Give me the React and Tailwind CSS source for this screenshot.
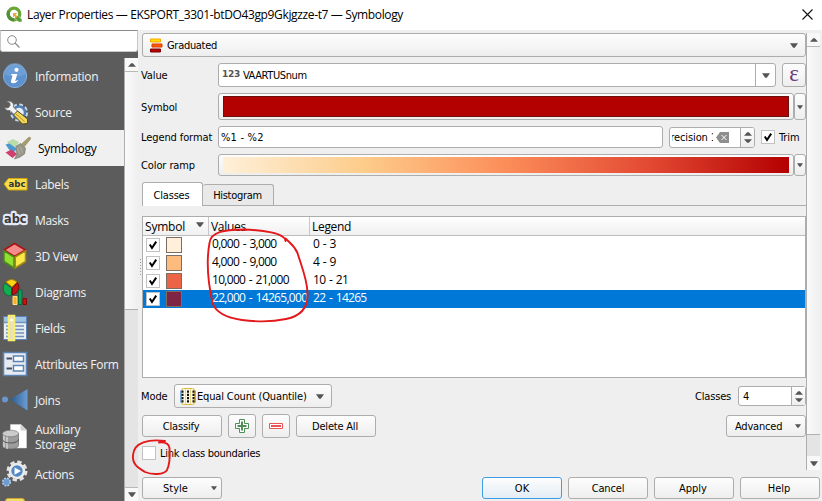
import React from "react";

const UI = "font-['DejaVu_Sans_Condensed','Noto_Sans',sans-serif]";
const SEGOE = "font-['Open_Sans','Noto_Sans',sans-serif]";
const FACE = "bg-gradient-to-b from-[#fdfdfd] to-[#eeeeee] border border-[#adadad] rounded-[3px]";

const Down = ({ small }) => (
  <svg width={small ? 6 : 8} height={small ? 4 : 5} viewBox="0 0 8 5" preserveAspectRatio="none" className="shrink-0">
    <path d="M0 0.3h8L4.8 4.7H3.2z" fill="#555" />
  </svg>
);
const Up = () => (
  <svg width="8" height="4" viewBox="0 0 8 5" preserveAspectRatio="none" className="shrink-0">
    <path d="M0 4.7h8L4.8 0.3H3.2z" fill="#555" />
  </svg>
);

function Check({ on }) {
  return (
    <span className="flex h-[14px] w-[14px] shrink-0 items-center justify-center border border-[#c2c2c2] bg-white">
      {on && (
        <svg width="10" height="10" viewBox="0 0 10 10">
          <path d="M1.8 4.4 4 8 8.200 1.600" fill="none" stroke="#000" strokeWidth="2" />
        </svg>
      )}
    </span>
  );
}

function Button({ children, className = "" }) {
  return (
    <button className={`${FACE} flex h-[22px] w-[80px] shrink-0 items-center justify-center ${className}`}>
      <span className="pt-[2px]">{children}</span>
    </button>
  );
}

function MenuButton({ children, className = "" }) {
  return (
    <button className={`${FACE} flex h-[22px] w-[80px] shrink-0 items-center pr-[4px] ${className}`}>
      <span className="flex-1 pt-[2px] text-left">{children}</span>
      <Down small />
    </button>
  );
}

function Spin() {
  return (
    <span className="flex h-full w-[14px] shrink-0 flex-col items-center justify-center gap-[3px] border-l border-[#adadad] bg-gradient-to-b from-[#fdfdfd] to-[#eeeeee]">
      <Up />
      <svg width="8" height="4" viewBox="0 0 8 5" preserveAspectRatio="none"><path d="M0 0.3h8L4.8 4.7H3.2z" fill="#555" /></svg>
    </span>
  );
}

/* ---------- sidebar icons, 28x28 ---------- */
const Svg = ({ children }) => (
  <svg width="28" height="28" viewBox="0 0 28 28" className="shrink-0">{children}</svg>
);
const icons = {
  info: (
    <Svg>
      <circle cx="14" cy="14" r="11.6" fill="#5d92cf" stroke="#86aedb" strokeWidth="1" />
      <path d="M3 12a11 11 0 0 1 22 0c-5 3-15 4-22 0z" fill="#79a6da" opacity=".6" />
      <circle cx="15.500" cy="7.800" r="2.100" fill="#fff" />
      <path d="M10.500 12h5.800l-2.100 7q1 .2 2.300-1l.5.7q-2.500 3-5.300 2.600-2.200-.4-1.600-2.800l1.500-5-1.500-.2z" fill="#fff" />
    </Svg>
  ),
  source: (
    <Svg>
      <circle cx="18" cy="14.500" r="7.500" fill="none" stroke="#c9d8ea" strokeWidth="3" strokeDasharray="3.600 2.290" />
      <circle cx="18" cy="14.500" r="6" fill="#e8eef5" stroke="#4f7db5" strokeWidth="2.500" />
      <path d="M5 3.500q4.500-1.500 7 1.500 1.200 2 .4 4l5.600 5.500-3.500 3.500-5.500-5.500q-4 .6-5.500-3l3.600.4 2-2.400-.3-2.400z" fill="#f2f2f2" stroke="#666" strokeWidth=".8" />
      <path d="m12.500 17 4-4 10 8v4.500l-5 .5z" fill="#f3d65c" stroke="#55481a" strokeWidth="1" />
      <path d="m15 16 8.500 7.500" stroke="#b99420" strokeWidth="1" />
    </Svg>
  ),
  symbology: (
    <Svg>
      <path d="M4 8 10 5l6 3-3 5.500-6-1z" fill="#b9dca9" />
      <path d="m2.500 10.500 4-1 7 5-4 6z" fill="#4b98d1" />
      <path d="m2.500 18.500 6-3 5.500 4.500-4.500 4z" fill="#d0416f" />
      <path d="M13 12.500 17.500 9.500l5 4.500-1 6q-4 3.500-10 5 3.500-4.500 1.500-8z" fill="#98978a" stroke="#77766a" strokeWidth=".7" />
      <path d="m14 13.500 3 7M17 12.500l2.500 6" stroke="#b9b8ab" strokeWidth=".8" />
      <path d="m18.500 10 7-6.500q2.500-1 2.300 1.200L21.500 12.500z" fill="#a89d70" stroke="#8a8058" strokeWidth=".5" />
    </Svg>
  ),
  labels: (
    <Svg>
      <path d="M3 14 7.500 8.500h18.500v11.500H7.500z" fill="#f7df4c" stroke="#d1a40e" strokeWidth="1" />
      <text x="7.500" y="17" fontSize="9.500" fontWeight="bold" fontFamily="DejaVu Sans" fill="#333" textLength="17" lengthAdjust="spacingAndGlyphs">abc</text>
    </Svg>
  ),
  masks: (
    <Svg>
      <text x="3" y="17" fontSize="13" fontWeight="bold" fontFamily="DejaVu Sans" fill="#3a3a3a" stroke="#e4e9f8" strokeWidth="4.500" strokeLinejoin="round" paintOrder="stroke" textLength="22.500" lengthAdjust="spacingAndGlyphs">abc</text>
    </Svg>
  ),
  cube: (
    <Svg>
      <path d="M13.500 1.500 24.500 8 13.500 14.500 3 8z" fill="#f58a8a" stroke="#a81515" strokeWidth="1.600" />
      <path d="M3 8.800 13 15v11L3 19.500z" fill="#8fe02f" stroke="#4a8f16" strokeWidth="1.500" />
      <path d="M24.500 8.800 14.300 15v11l10.200-6.500z" fill="#fbe94c" stroke="#a98b10" strokeWidth="1.500" />
    </Svg>
  ),
  diagrams: (
    <Svg>
      <path d="M10.500 10 4 5a7.500 8 0 0 0 4 13l2.500-1z" fill="#10b050" stroke="#0b6b35" />
      <path d="M11 9 5 4q5.500-5 11 0z" fill="#fbd514" stroke="#a88000" />
      <path d="M11.500 10 16.500 4.500q3 5-.500 10l-5 2.500z" fill="#c81212" stroke="#7a0808" />
      <path d="M12 18.500h4V26.500h-4z" fill="#fcae22" stroke="#ffe38a" />
      <path d="M17.500 12h3.500v14.500h-3.500z" fill="#0ba05a" stroke="#06693a" />
      <path d="M22 20.500h3.500V26.500H22z" fill="#c81212" stroke="#8a0808" />
    </Svg>
  ),
  fields: (
    <Svg>
      <path d="M2.500 2.500h23v23h-23z" fill="#e9eef3" stroke="#5b82b4" />
      <path d="M3 3h22v5H3z" fill="#9fc3e6" />
      <path d="M3 8.500h22M5 12h18M5 15.500h18M5 19h18M5 22.500h18" stroke="#7391b8" strokeWidth="1.400" />
      <path d="M7.500 1.500h6v25h-6z" fill="#e9e2b4" stroke="#faf06a" strokeWidth="1.600" />
      <circle cx="10.500" cy="6" r="1.500" fill="#fff" />
    </Svg>
  ),
  form: (
    <Svg>
      <path d="M2.500 2.500h23v23h-23z" fill="#e6ebf1" stroke="#5b82b4" strokeWidth="1.600" />
      <path d="M5.500 8.500H11M5.500 18.500H11" stroke="#44506a" strokeWidth="2" />
      <path d="M12.500 6h10v5.500h-10zM12.500 15.500h10V21h-10z" fill="#fff" stroke="#5b82b4" strokeWidth="1.500" />
    </Svg>
  ),
  joins: (
    <Svg>
      <defs><linearGradient id="jg" x1="0" x2="1"><stop offset="0" stopColor="#275a8f" /><stop offset="1" stopColor="#6b9dd3" /></linearGradient></defs>
      <path d="M9 13.500 26.500 3v21.500z" fill="url(#jg)" />
      <circle cx="4" cy="13.500" r="3" fill="#6b97cd" />
    </Svg>
  ),
  storage: (
    <Svg>
      <path d="M9.500 1.500h10.500l5.500 5.500v18H9.500z" fill="#fff" stroke="#ddd" strokeWidth=".5" />
      <path d="M19.500 1.500v6h6z" fill="#cfcfcf" />
      <path d="M1.500 10.500v12a8 3.500 0 0 0 16 0v-12z" fill="#9c9c9c" stroke="#666" strokeWidth=".7" />
      <path d="M3 11v13.500M6 12v14" stroke="#ddd" strokeWidth="1.800" opacity=".7" />
      <ellipse cx="9.500" cy="10.500" rx="8" ry="3.300" fill="#cbcbcb" stroke="#777" strokeWidth=".7" />
      <path d="M1.500 16.500a8 3.500 0 0 0 16 0" fill="none" stroke="#555" />
    </Svg>
  ),
  actions: (
    <Svg>
      <circle cx="16" cy="11" r="9.200" fill="none" stroke="#e3e3e3" strokeWidth="2.600" strokeDasharray="4.400 2.825" />
      <circle cx="16" cy="11" r="7" fill="#5288c5" stroke="#ececec" strokeWidth="2.600" />
      <path d="m13.500 7.500 6.500 3.500-6.500 3.800z" fill="#fff" />
      <circle cx="5.500" cy="22" r="3.800" fill="#6c9bd1" stroke="#bdd0e6" strokeWidth="1.500" strokeDasharray="1.800 1.200" />
    </Svg>
  ),
};

const items = [
  ["info", "Information"], ["source", "Source"], ["symbology", "Symbology"], ["labels", "Labels"],
  ["masks", "Masks"], ["cube", "3D View"], ["diagrams", "Diagrams"], ["fields", "Fields"],
  ["form", "Attributes Form"], ["joins", "Joins"], ["storage", "Auxiliary Storage"], ["actions", "Actions"],
];

function Sidebar() {
  return (
    <aside className="flex w-[138px] shrink-0 flex-col bg-[#5c5c5c]">
      <div className="flex h-[22px] shrink-0 items-center rounded-b-[3px] border border-t-[#8a8a8a] border-[#c8c8c8] bg-white pl-[6px]">
        <svg width="13" height="13" viewBox="0 0 13 13"><circle cx="5" cy="5" r="4.300" fill="none" stroke="#8a8a8a" /><path d="m8 8 4.500 4.500" stroke="#8a8a8a" strokeWidth="1.300" /></svg>
      </div>
      <div className="flex min-h-0 flex-1">
        <nav className="flex w-[124px] flex-col overflow-hidden pt-[6px]">
          {items.map(([k, t]) => {
            const sel = k === "symbology";
            const tall = k === "storage";
            return (
              <div key={k} className={`flex shrink-0 items-center ${tall ? "h-[38px]" : "h-[36px]"} ${sel ? "gap-[7px] bg-[#f0f0f0] pl-[3px] text-black" : "gap-[6px] pl-[1px] text-[#f2f2f2]"}`}>
                {icons[k]}
                <span className={`${tall ? "w-[70px]" : "whitespace-nowrap pt-px"} text-[12px] leading-[15px] tracking-[-0.3px]`}>{t}</span>
              </div>
            );
          })}
          <div className="ml-[5px] mt-[6px] h-[10px] w-[20px] shrink-0 rounded-[3px] border border-[#c9a92a] bg-[#f3dc6e]" />
        </nav>
        <div className="mt-[6px] flex w-[14px] flex-col border-l border-[#adadad] bg-[#e4e4e4]">
          <div className="flex h-[14px] items-center justify-center border-b border-[#b8b8b8] bg-[#f8f8f8]"><Up /></div>
          <div className="h-[238px] border-b border-[#b0b0b0] bg-gradient-to-r from-[#fafafa] to-[#efefef]" />
          <div className="flex-1" />
          <div className="flex h-[14px] items-center justify-center border-t border-[#b8b8b8] bg-[#f8f8f8]"><Down /></div>
        </div>
      </div>
    </aside>
  );
}

const rows = [
  ["#ffefdb", "0,000 - 3,000", "0 - 3"],
  ["#fdbb7d", "4,000 - 9,000", "4 - 9"],
  ["#ec6446", "10,000 - 21,000", "10 - 21"],
  ["#7f2442", "22,000 - 14265,000", "22 - 14265"],
];

function Table() {
  return (
    <div className={`mt-[10px] h-[162px] border border-[#adadad] bg-white text-[12px] ${SEGOE}`}>
      <div className="flex h-[19px] items-center border-b border-[#bdbdbd] bg-gradient-to-b from-white to-[#f0f0f0]">
        <div className="flex h-full w-[66px] items-center justify-between border-r border-[#c8c8c8] pl-[2px] pr-[4px]"><span className="pt-px tracking-[-0.2px]">Symbol</span><span className="pb-[3px]"><Down /></span></div>
        <div className="flex h-full w-[101px] items-center border-r border-[#c8c8c8] pl-[2px] pt-px tracking-[-0.3px]">Values</div>
        <div className="pl-[2px] pt-px tracking-[-0.3px]">Legend</div>
      </div>
      {rows.map(([c, v, l], i) => (
        <div key={v} className={`flex h-[18px] items-center ${i === 3 ? "bg-[#0078d7] text-white" : "text-black"}`}>
          <div className="flex w-[66px] items-center gap-[6px] pl-[3px]">
            <Check on />
            <span className="h-[16px] w-[16px] border border-[#7c6d60]" style={{ backgroundColor: c }} />
          </div>
          <div className="w-[101px] whitespace-nowrap pb-[2px] pl-[3px] tracking-[-0.7px] [word-spacing:1.2px]">{v}</div>
          <div className="pb-[2px] pl-[3px] tracking-[-0.7px] [word-spacing:1.2px]">{l}</div>
        </div>
      ))}
    </div>
  );
}

const Label = ({ children }) => <span className="-ml-px w-[77px] shrink-0 whitespace-nowrap pt-[3px] tracking-[-0.1px]">{children}</span>;

function Main() {
  return (
    <main className="flex w-[664px] shrink-0 flex-col pt-[3px]">
      <div className={`${FACE} flex h-[24px] items-center pl-[6px] pr-[7px]`}>
        <svg width="14" height="15" viewBox="0 0 14 15" className="mr-[4px]">
          <path d="M1.500 1h10v3h-10z" fill="#ffe000" stroke="#f5a800" />
          <path d="M3 6h10v3H3z" fill="#ff5a00" stroke="#d93a00" />
          <path d="M1.500 11h10v3h-10z" fill="#b80000" stroke="#7d0000" />
        </svg>
        <span className="flex-1 pt-[3px] tracking-[-0.3px]">Graduated</span><Down />
      </div>

      <div className="mt-[6px] flex h-[24px] items-center">
        <Label>Value</Label>
        <div className="flex h-full w-[558px] items-center rounded-[3px] border border-[#adadad] bg-white pl-[3px]">
          <b className="-mt-px mr-[3px] font-['DejaVu_Sans'] text-[9px] text-[#555] tracking-[-0.3px]">123</b>
          <span className="flex-1 pt-[3px] tracking-[-0.4px]">VAARTUSnum</span>
          <span className="flex h-full w-[20px] items-center justify-center border-l border-[#adadad]"><Down /></span>
        </div>
        <div className={`${FACE} ml-[6px] flex h-[24px] w-[24px] items-center justify-center pb-[3px] font-['Liberation_Serif'] text-[23px] leading-none text-[#6b3a7a]`}>ε</div>
      </div>

      <div className="mt-[6px] flex h-[27px] items-center">
        <Label>Symbol</Label>
        <div className={`${FACE} h-full w-[576px] px-[4px] py-[2px]`}><div className="h-full border border-[#6a1010] bg-[#b30000]" /></div>
        <div className={`${FACE} flex h-full w-[12px] items-center justify-center`}><Down small /></div>
      </div>

      <div className="mt-[6px] flex h-[22px] items-center">
        <Label>Legend format</Label>
        <div className="flex h-full w-[445px] items-center rounded-[3px] border border-[#adadad] bg-white pl-[2px] pt-[2px] tracking-[0.2px]">%1 - %2</div>
        <div className="ml-[6px] flex h-[21px] w-[86px] items-center overflow-hidden rounded-[3px] border border-[#adadad] bg-white">
          <span className="ml-[2px] flex w-[41px] justify-end overflow-hidden whitespace-nowrap pt-[2px]"><span className="-mr-[4px] tracking-[-0.1px]">Precision 1</span></span>
          <svg width="13" height="11" viewBox="0 0 13 11" className="ml-[3px]"><path d="M4 0h9v11H4L0 5.500z" fill="#8e8e8e" /><path d="m5.500 3 5 5m0-5-5 5" stroke="#fff" /></svg>
          <span className="flex-1" />
          <Spin />
        </div>
        <div className="ml-[6px] flex items-center gap-[4px]"><Check on /><span className="pt-[2px] tracking-[-0.1px]">Trim</span></div>
      </div>

      <div className="mt-[6px] flex h-[22px] items-center">
        <Label>Color ramp</Label>
        <div className={`${FACE} h-full w-[576px] px-[4px] py-[2px]`}><div className="h-full bg-[linear-gradient(90deg,#fef0d9_0%,#fdcc8a_25%,#fc8d59_50%,#e34a33_75%,#b30000_100%)]" /></div>
        <div className={`${FACE} flex h-full w-[12px] items-center justify-center`}><Down small /></div>
      </div>

      <div className="mt-[6px] flex h-[24px] items-end border-b border-[#adadad]">
        <div className="-mb-px flex h-[24px] w-[61px] items-center justify-center rounded-t-[3px] border border-b-0 border-[#adadad] bg-white pr-[2px] pt-[3px] tracking-[-0.2px]">Classes</div>
        <div className="flex h-[21px] w-[71px] items-center justify-center rounded-t-[3px] border border-b-0 border-l-0 border-[#adadad] bg-[#e9e9e9] pr-px pt-[3px] tracking-[-0.3px]">Histogram</div>
      </div>

      <Table />

      <div className="mt-[6px] flex h-[24px] items-center">
        <span className="-ml-px w-[33px] pt-[3px] tracking-[-0.1px]">Mode</span>
        <div className={`${FACE} flex h-full w-[158px] items-center pl-[5px] pr-[7px]`}>
          <svg width="16" height="17" viewBox="0 0 16 17" className="mr-px">
            <rect x="1.500" y=".5" width="13" height="16" rx="2" fill="#fffbe4" stroke="#dcb93c" />
            <path d="M5.500 1v15M10.500 1v15" stroke="#e8d68a" />
            <path d="M.5 2.500v12M15.500 2.500v12" stroke="#7bb0dd" />
            <path d="M2.500 2.500v12M8 2.500v12M13.500 2.500v12" stroke="#111" strokeWidth="2" strokeDasharray="2.200 1.070" />
          </svg>
          <span className="flex-1 whitespace-nowrap pt-[3px] tracking-[-0.15px]">Equal Count (Quantile)</span><Down />
        </div>
        <span className="flex-1" />
        <span className="mr-[7px] pt-[3px] tracking-[-0.2px]">Classes</span>
        <div className="flex h-[20px] w-[68px] items-center justify-between rounded-[3px] border border-[#adadad] bg-white pl-[4px]"><span className="pt-[3px]">4</span><Spin /></div>
      </div>

      <div className="mt-[6px] flex h-[24px] items-center">
        <Button className="pr-[2px] tracking-[-0.15px]">Classify</Button>
        <span className={`${FACE} ml-[6px] flex h-[24px] w-[28px] items-center justify-center`}>
          <svg width="14" height="14" viewBox="0 0 14 14"><path d="M4.500 .5h5v4h4v5h-4v4h-5v-4h-4v-5h4z" fill="#fff" stroke="#4d8f55" /><path d="M7 2.500v9M2.500 7h9" stroke="#4d8f55" strokeWidth="2" /></svg>
        </span>
        <span className={`${FACE} ml-[6px] flex h-[24px] w-[28px] items-center justify-center`}>
          <svg width="14" height="6" viewBox="0 0 14 6"><path d="M.5 .5h13v5H.5z" fill="#fff" stroke="#ea5454" /><path d="M2 3h10" stroke="#ea5454" strokeWidth="2" /></svg>
        </span>
        <Button className="ml-[6px] pr-[2px] tracking-[-0.2px]">Delete All</Button>
        <span className="flex-1" />
        <MenuButton className="pl-[8px] tracking-[-0.2px]">Advanced</MenuButton>
      </div>

      <div className="mt-[8px] flex h-[14px] items-center gap-[4px]"><Check /><span className="pt-[3px] tracking-[-0.3px]">Link class boundaries</span></div>
    </main>
  );
}

export default function App() {
  return (
    <div className={`relative flex h-[501px] w-[822px] flex-col overflow-hidden bg-[#efefef] text-[11px] text-black ${UI}`}>
      <header className={`flex h-[30px] shrink-0 items-center bg-white pl-[6px] pr-[7px] text-[12px] ${SEGOE}`}>
        <svg width="17" height="17" viewBox="0 0 17 17" className="-mt-px mr-[4px]">
          <circle cx="8" cy="8" r="5.800" fill="none" stroke="#6aa636" strokeWidth="3.200" />
          <path d="M8 13.800A5.800 5.800 0 0 1 3 5" fill="none" stroke="#4e9038" strokeWidth="3.200" />
          <path d="M9 9.500h3l4 4v2.500h-3.500L9 12.500z" fill="#5b9f36" stroke="#fff" strokeWidth=".5" />
          <path d="M7 7h4.500L9.500 8.800l2 2-1.200 1.200-2-2L7 11.500z" fill="#efa53a" />
        </svg>
        <span className="flex-1 whitespace-nowrap tracking-[-0.36px]">Layer Properties — EKSPORT_3301-btDO43gp9Gkjgzze-t7 — Symbology</span>
        <svg width="11" height="11" viewBox="0 0 11 11" className="-mt-[2px] mr-[2px]"><path d="m.5.5 10 10m0-10-10 10" stroke="#111" strokeWidth="1.100" /></svg>
      </header>
      <div className="flex min-h-0 flex-1">
        <div className={`flex ${SEGOE}`}><Sidebar /></div>
        <div className="flex w-[4px] shrink-0 flex-col items-center gap-[2px] pt-[229px]">
          {[0, 1, 2, 3, 4, 5].map((i) => <span key={i} className="h-px w-px shrink-0 bg-[#999]" />)}
        </div>
        <div className="flex flex-1 flex-col">
          <div className="flex h-[440px] shrink-0">
            <Main />
            <div className="mt-[3px] flex w-[14px] flex-col border-l border-[#adadad] bg-[#e4e4e4]">
              <div className="flex h-[14px] items-center justify-center border-b border-[#b8b8b8] bg-[#f8f8f8]"><Up /></div>
              <div className="h-[388px] border-b border-[#b0b0b0] bg-gradient-to-r from-[#fafafa] to-[#efefef]" />
              <div className="flex-1" />
              <div className="flex h-[14px] items-center justify-center bg-[#f8f8f8]"><Down /></div>
            </div>
          </div>
          <footer className="mt-[7px] flex gap-[6px] pr-[2px]">
            <MenuButton className="pl-[20px]">Style</MenuButton>
            <span className="flex-1" />
            <Button className="border-[#3c9ee5]! to-[#e3edf5]!">OK</Button>
            <Button className="tracking-[-0.15px]">Cancel</Button>
            <Button className="pr-[2px]">Apply</Button>
            <Button className="pr-[2px]">Help</Button>
          </footer>
        </div>
      </div>
      <svg className="pointer-events-none absolute left-0 top-0" width="822" height="501" viewBox="0 0 822 501">
        <g fill="none" stroke="#e3191b" strokeWidth="1.900" strokeLinecap="round" strokeLinejoin="round">
          <path d="M285.500 241C285 233 262 230 243 229.500 226 230 211 231 209.500 243 206 262 209 287 212.500 303 216 313 228 318 242 320 258 322 272 322 286 319 301 316 308 307 307.500 294 308 281 300 262 297.500 253 294 245 290 243 285.500 238.500" />
          <path d="M165 441C149 439 134 442 133 455 132 465 139 468 145 472 152 475 164 475 167 470 170 464 170 455 169.500 448 169 444 165 442 159 442.500" />
        </g>
      </svg>
    </div>
  );
}
